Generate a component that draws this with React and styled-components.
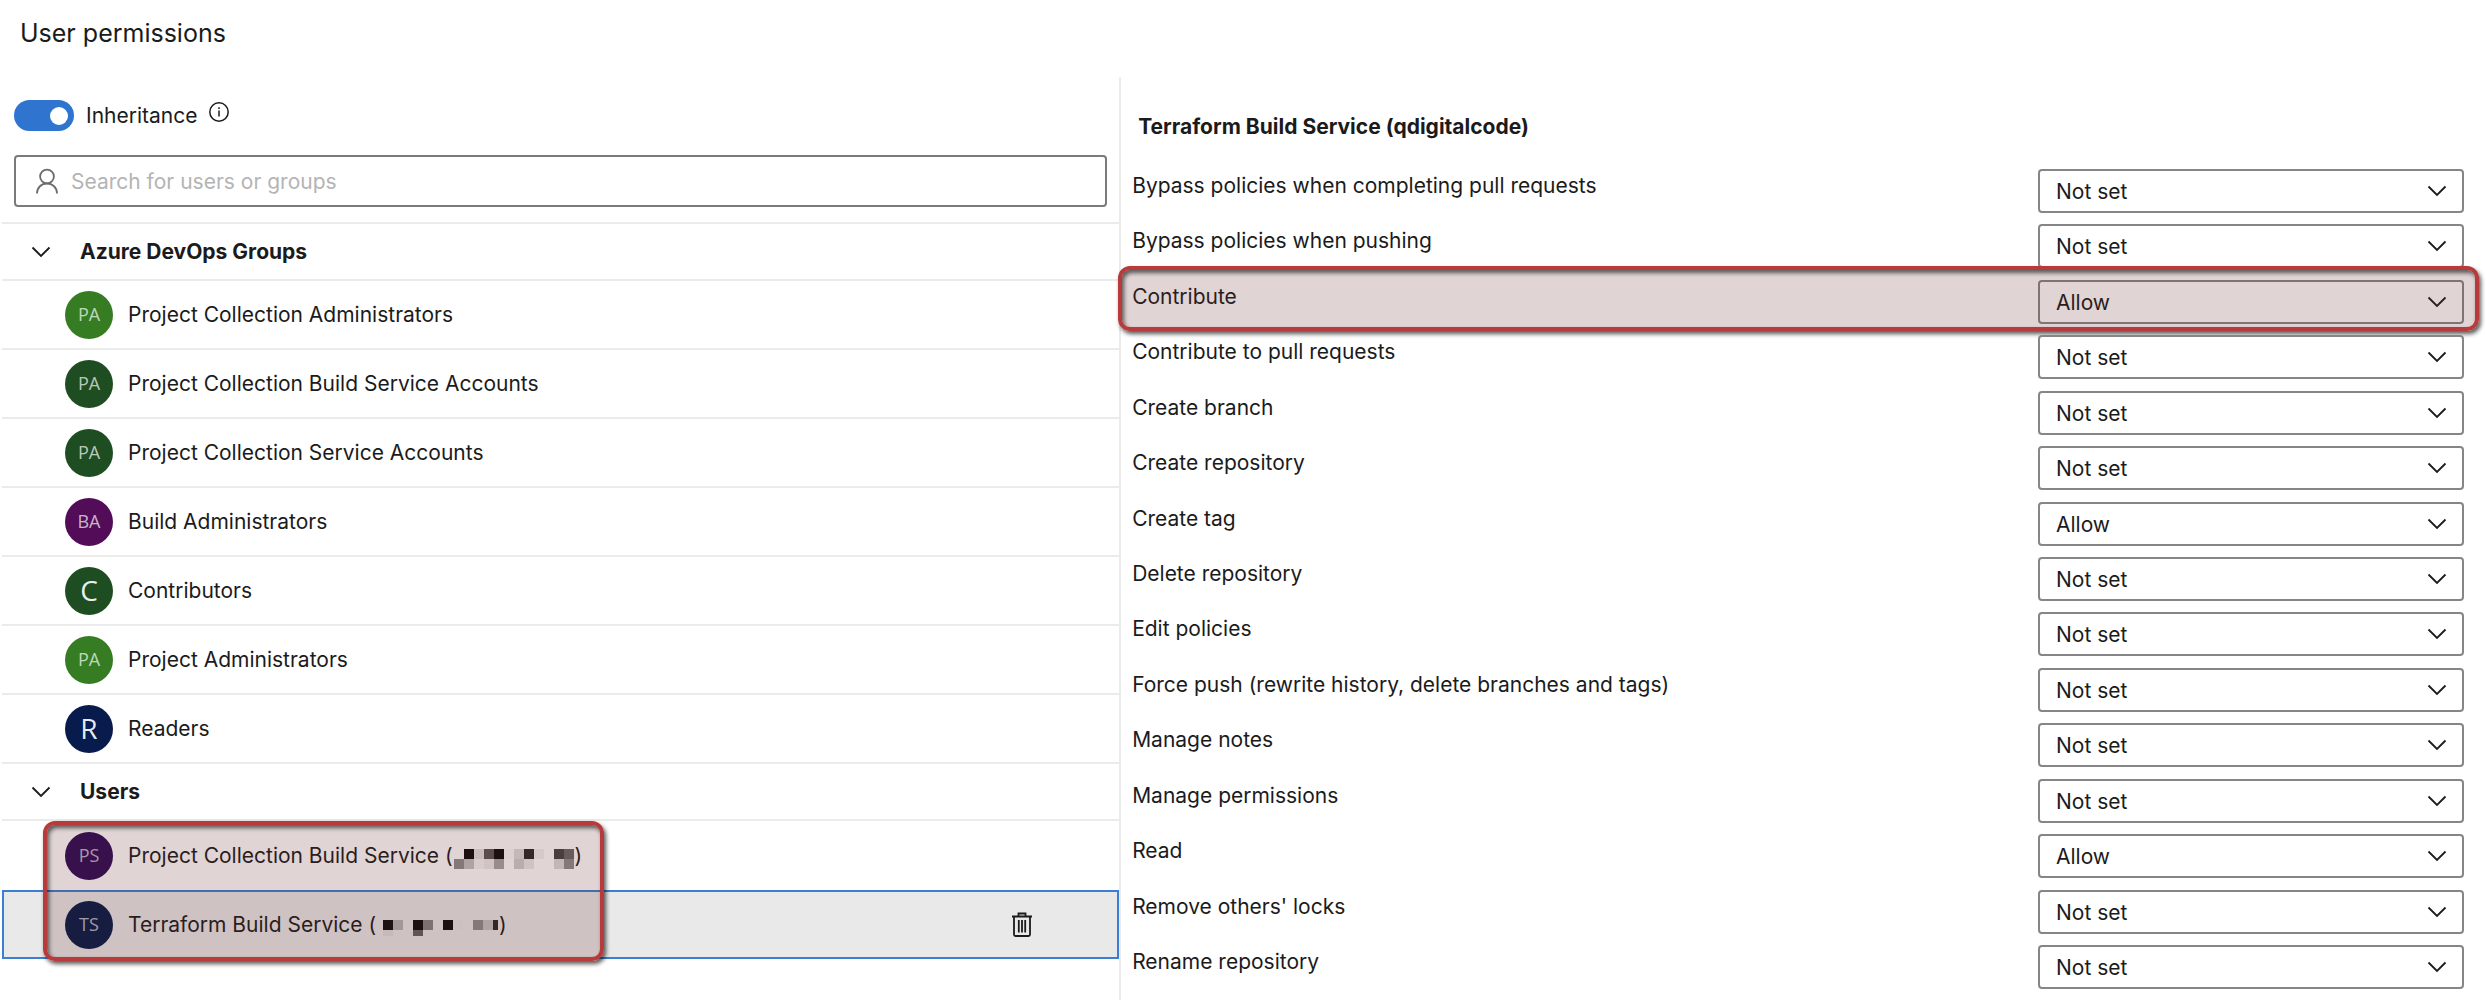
import React, { useState } from "react";
import styled, { createGlobalStyle } from "styled-components";

const GlobalStyle = createGlobalStyle`
  *, *::before, *::after { box-sizing: border-box; }
  body { margin: 0; background: #fff; color: #1b1b1b; }
  body, button, input, select { font-family: Inter, Roboto, "Liberation Sans", sans-serif; font-size: 21px; line-height: 28px; }
`;

const Page = styled.div`
  min-height: 100vh;
  display: flex;
  flex-direction: column;
`;

const Title = styled.h1`
  margin: 0;
  padding: 17px 20px 28px;
  font-size: 25px;
  line-height: 32px;
  font-weight: 400;
`;

const Columns = styled.div`
  flex: 1;
  display: grid;
  grid-template-columns: 45% 55%;
`;

const Identities = styled.section`
  padding: 22px 0 32px 2px;
`;

const InheritanceBar = styled.div`
  display: flex;
  align-items: center;
  gap: 12px;
  height: 33px;
  margin-left: 12px;
`;

const Toggle = styled.input`
  appearance: none;
  display: flex;
  align-items: center;
  justify-content: flex-end;
  width: 60px;
  height: 31px;
  margin: 0;
  padding: 0 6px;
  border-radius: 16px;
  background: #2f75cf;
  &::before {
    content: "";
    width: 18px;
    height: 18px;
    border-radius: 50%;
    background: #fff;
  }
  &:not(:checked) { justify-content: flex-start; background: #767676; }
`;

const InfoButton = styled.button`
  display: flex;
  align-self: flex-start;
  padding: 3px 0 0;
  border: 0;
  background: none;
  color: #1b1b1b;
`;

const SearchBox = styled.label`
  display: flex;
  align-items: center;
  gap: 12px;
  height: 52px;
  margin: 23px 12px 15px;
  padding: 0 19px;
  border: 2px solid #7b7b7b;
  border-radius: 4px;
  color: #6b6b6b;
`;

const SearchInput = styled.input`
  flex: 1;
  min-width: 0;
  padding: 2px 0 0;
  border: 0;
  outline: 0;
  background: none;
  color: #1b1b1b;
  &::placeholder { color: #b4b4b4; opacity: 1; }
`;

const Groups = styled.div`
  border-top: 2px solid #ebebeb;
`;

const GroupHeader = styled.h2`
  margin: 0;
  border-bottom: 2px solid #ebebeb;
`;

const GroupToggle = styled.button`
  display: flex;
  align-items: center;
  gap: 29px;
  width: 100%;
  height: 55px;
  padding: 1px 29px 0;
  border: 0;
  background: none;
  color: #1b1b1b;
  font-weight: 700;
`;

const List = styled.ul`
  position: relative;
  margin: 0;
  padding: 0;
  list-style: none;
`;

const Identity = styled.li`
  display: flex;
  align-items: center;
  gap: 15px;
  height: 69px;
  padding: 0 87px 0 63px;
  border-bottom: ${(p) => (p.$last || p.$selected ? "0" : "2px solid #ebebeb")};
  background: ${(p) => (p.$selected ? "#e9e9e9" : "none")};
  box-shadow: ${(p) => (p.$selected ? "inset 0 0 0 2px #3a7fd5" : "none")};
`;

const Avatar = styled.span`
  flex: none;
  width: 48px;
  height: 48px;
  border-radius: 50%;
  background: ${(p) => p.$color};
  color: ${(p) => (p.$large ? "rgba(255,255,255,.92)" : "rgba(255,255,255,.7)")};
  font-family: "Open Sans", "Noto Sans", sans-serif;
  font-size: ${(p) => (p.$large ? "28px" : "18px")};
  line-height: 46px;
  text-align: center;
`;

const Name = styled.span`
  display: flex;
  align-items: center;
  padding-top: 1px;
  white-space: pre;
`;

const Mosaic = styled.svg`
  margin: 5px 1px 0;
`;

const DeleteButton = styled.button`
  display: flex;
  margin-left: auto;
  padding: 0;
  border: 0;
  background: none;
  color: #1b1b1b;
`;

const Marker = styled.div`
  position: absolute;
  pointer-events: none;
  border: 4px solid #b83a3b;
  border-radius: 12px;
  background: rgba(100, 40, 40, 0.2);
  box-shadow: 2px 3px 4px rgba(0, 0, 0, 0.65), inset 2px 3px 4px rgba(0, 0, 0, 0.6);
`;

const UsersMarker = styled(Marker)`
  inset: 0 auto -2px 41px;
  width: 561px;
`;

const RowMarker = styled(Marker)`
  inset: -8px 8px -2px -3px;
`;

const Permissions = styled.section`
  display: flex;
  flex-direction: column;
  padding-bottom: 5px;
  border-left: 2px solid #ebebeb;
`;

const Subject = styled.h2`
  margin: 0;
  padding: 36px 17px 22px;
  font-size: 21px;
  line-height: 28px;
  font-weight: 700;
`;

const PermissionList = styled.div`
  flex: 1;
  display: grid;
  grid-auto-rows: 1fr;
`;

const PermissionRow = styled.div`
  position: relative;
  display: flex;
  align-items: center;
  padding: 0 23px 0 11px;
`;

const PermissionLabel = styled.label`
  flex: 1;
  padding-bottom: 10px;
`;

const SelectBox = styled.div`
  display: grid;
  align-items: center;
  width: 426px;
  & > * { grid-area: 1 / 1; }
  & > svg { justify-self: end; margin-right: 17px; pointer-events: none; }
`;

const Select = styled.select`
  appearance: none;
  width: 100%;
  height: 44px;
  padding: 2px 16px 0;
  border: 2px solid #868686;
  border-radius: 4px;
  background: #fff;
  color: #1b1b1b;
`;

const Chevron = () => (
  <svg width="20" height="20" viewBox="0 0 20 20" fill="none" stroke="currentColor" strokeWidth="1.8">
    <path d="M1.500 5.500l8.500 8.500 8.500-8.500" />
  </svg>
);

const InfoIcon = () => (
  <svg width="20" height="20" viewBox="0 0 20 20" fill="none" stroke="currentColor" strokeWidth="1.5">
    <circle cx="10" cy="10" r="9.2" />
    <path d="M10 8.500v6M10 5.200v1.800" />
  </svg>
);

const PersonIcon = () => (
  <svg width="24" height="26" viewBox="0 0 24 26" fill="none" stroke="currentColor" strokeWidth="1.8">
    <circle cx="12" cy="8.5" r="6.9" />
    <path d="M2 25.500c0-6 4.500-10 10-10s10 4 10 10" />
  </svg>
);

const TrashIcon = () => (
  <svg width="20" height="26" viewBox="0 0 20 26" fill="none" stroke="currentColor" strokeWidth="1.8">
    <path d="M0 4.500h20M6.500 4V1.500h7V4M2 5v17.500q0 1.500 1.500 1.500h13q1.500 0 1.500-1.500V5M6.800 8v12.500M10 8v12.500M13.200 8v12.500" />
  </svg>
);

const Redaction = ({ cells, width, height }) => (
  <Mosaic width={width} height={height} viewBox={`0 0 ${width} ${height}`} shapeRendering="crispEdges" aria-hidden="true">
    {cells.map(([x, y, fill]) => (
      <rect key={`${x}-${y}`} x={x * 10} y={y * 10} width="10" height="10" fill={fill} />
    ))}
  </Mosaic>
);

const collectionCells = [
  [1, 0, "#0a0a0a"], [2, 0, "#e2e2e2"], [3, 0, "#5a5757"], [4, 0, "#0a0a0a"], [5, 0, "#fafafa"], [6, 0, "#dcdcdc"],
  [7, 0, "#2c2828"], [8, 0, "#f2f2f2"], [10, 0, "#444"], [11, 0, "#6a6868"],
  [0, 1, "#8d8d8d"], [1, 1, "#c2c2c2"], [2, 1, "#f4f4f4"], [3, 1, "#eaeaea"], [4, 1, "#a5a5a5"], [6, 1, "#cfcfcf"],
  [7, 1, "#eaeaea"], [10, 1, "#dadada"], [11, 1, "#8c8c8c"],
];

const terraformCells = [
  [0, 0, "#0f0d0d"], [1, 0, "#b3b3b3"], [3, 0, "#0a0a0a"], [4, 0, "#848484"], [6, 0, "#0a0a0a"], [7, 0, "#e6e6e6"],
  [9, 0, "#8d8d8d"], [10, 0, "#c4c4c4"], [11, 0, "#2c2828"], [0, 1, "#dedede"], [3, 1, "#5f5f5f"],
];

const groups = [
  ["PA", "#367c22", "Project Collection Administrators"],
  ["PA", "#1f4d22", "Project Collection Build Service Accounts"],
  ["PA", "#1f4d22", "Project Collection Service Accounts"],
  ["BA", "#530c57", "Build Administrators"],
  ["C", "#1f4d22", "Contributors"],
  ["PA", "#367c22", "Project Administrators"],
  ["R", "#081b4d", "Readers"],
];

const permissions = [
  ["Bypass policies when completing pull requests", "Not set"],
  ["Bypass policies when pushing", "Not set"],
  ["Contribute", "Allow", true],
  ["Contribute to pull requests", "Not set"],
  ["Create branch", "Not set"],
  ["Create repository", "Not set"],
  ["Create tag", "Allow"],
  ["Delete repository", "Not set"],
  ["Edit policies", "Not set"],
  ["Force push (rewrite history, delete branches and tags)", "Not set"],
  ["Manage notes", "Not set"],
  ["Manage permissions", "Not set"],
  ["Read", "Allow"],
  ["Remove others' locks", "Not set"],
  ["Rename repository", "Not set"],
];

function Permission({ id, label, value, marked }) {
  return (
    <PermissionRow>
      <PermissionLabel htmlFor={id}>{label}</PermissionLabel>
      <SelectBox>
        <Select id={id} defaultValue={value}>
          <option>Not set</option>
          <option>Allow</option>
          <option>Deny</option>
        </Select>
        <Chevron />
      </SelectBox>
      {marked && <RowMarker />}
    </PermissionRow>
  );
}

export default function App() {
  const [inherit, setInherit] = useState(true);
  return (
    <Page>
      <GlobalStyle />
      <Title>User permissions</Title>
      <Columns>
        <Identities>
          <InheritanceBar>
            <Toggle id="inheritance" type="checkbox" role="switch" checked={inherit} onChange={(e) => setInherit(e.target.checked)} />
            <label htmlFor="inheritance">Inheritance</label>
            <InfoButton type="button" aria-label="About inheritance"><InfoIcon /></InfoButton>
          </InheritanceBar>
          <SearchBox>
            <PersonIcon />
            <SearchInput type="text" aria-label="Search for users or groups" placeholder="Search for users or groups" />
          </SearchBox>
          <Groups>
            <GroupHeader><GroupToggle type="button"><Chevron />Azure DevOps Groups</GroupToggle></GroupHeader>
            <List>
              {groups.map(([initials, color, name]) => (
                <Identity key={name}>
                  <Avatar $color={color} $large={initials.length === 1}>{initials}</Avatar>
                  <Name>{name}</Name>
                </Identity>
              ))}
            </List>
            <GroupHeader><GroupToggle type="button"><Chevron />Users</GroupToggle></GroupHeader>
            <List>
              <Identity $last>
                <Avatar $color="#2c0a55">PS</Avatar>
                <Name>
                  {"Project Collection Build Service ("}
                  <Redaction cells={collectionCells} width={120} height={20} />)
                </Name>
              </Identity>
              <Identity $selected>
                <Avatar $color="#041a48">TS</Avatar>
                <Name>
                  {"Terraform Build Service ( "}
                  <Redaction cells={terraformCells} width={115} height={16} />)
                </Name>
                <DeleteButton type="button" aria-label="Remove Terraform Build Service"><TrashIcon /></DeleteButton>
              </Identity>
              <UsersMarker as="li" role="presentation" />
            </List>
          </Groups>
        </Identities>
        <Permissions>
          <Subject>Terraform Build Service (qdigitalcode)</Subject>
          <PermissionList>
            {permissions.map(([label, value, marked], i) => (
              <Permission key={label} id={`permission-${i}`} label={label} value={value} marked={marked} />
            ))}
          </PermissionList>
        </Permissions>
      </Columns>
    </Page>
  );
}
